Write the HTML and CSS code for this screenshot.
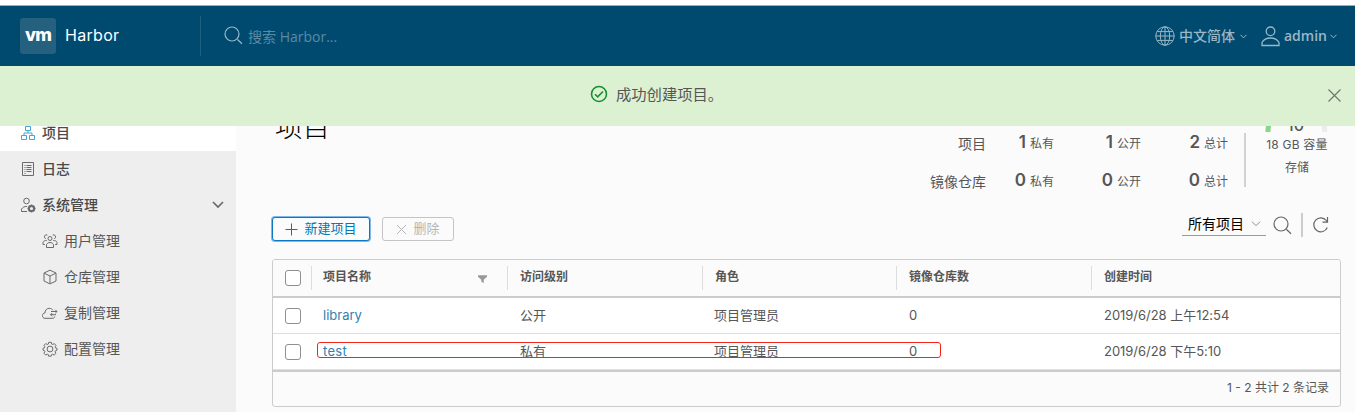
FILE: index.html
```html
<!DOCTYPE html>
<html lang="zh-CN">
<head>
<meta charset="utf-8">
<title>Harbor</title>
<link rel="stylesheet" href="styles.css">
</head>
<body>
<header class="header">
  <div class="logo">vm</div>
  <span class="brand">Harbor</span>
  <div class="search">
    <svg class="search-icon" width="20" height="20" viewBox="0 0 20 20"><circle cx="8" cy="8" r="7"/><path d="M13.5 13.5l4.5 4.3"/></svg>
    <span class="placeholder">搜索 Harbor...</span>
  </div>
  <div class="account">
    <svg class="globe" width="20" height="20" viewBox="0 0 20 20"><circle cx="10" cy="10" r="9.2"/><ellipse cx="10" cy="10" rx="4.7" ry="9.2"/><path d="M10 .8v18.4M.8 10h18.4M2 5.6h16M2 14.4h16"/></svg>
    <span class="lang">中文简体</span>
    <svg class="caret" width="7" height="5" viewBox="0 0 7 5"><path d="M.5.8l3 3 3-3"/></svg>
    <svg class="person" width="19" height="21" viewBox="0 0 19 21"><circle cx="9.5" cy="5.3" r="4.3"/><path d="M1 19.5v-3c1.700-3 4.800-4.500 8.500-4.500s6.800 1.500 8.500 4.500v3z"/></svg>
    <span class="user">admin</span>
    <svg class="caret" width="7" height="5" viewBox="0 0 7 5"><path d="M.5.8l3 3 3-3"/></svg>
  </div>
</header>
<div class="alert">
  <svg class="ok" width="18" height="18" viewBox="0 0 18 18"><circle cx="9" cy="9" r="7.500"/><path d="M5 9.200l2.700 2.700 5.300-5.400"/></svg>
  <span>成功创建项目。</span>
  <svg class="close" width="13" height="13" viewBox="0 0 13 13"><path d="M.5.5l12 12M12.500.5l-12 12"/></svg>
</div>
<div class="body">
  <nav class="sidebar">
    <div class="nav-item active">
      <svg class="blue" width="16" height="16" viewBox="0 0 16 16"><path d="M5.500 1.500h5v4h-5zM1.500 10.500h5v4h-5zM9.500 10.500h5v4h-5zM8 5.500v2.500M4 10V8h8v2"/></svg>
      <span>项目</span>
    </div>
    <div class="nav-item">
      <svg width="16" height="16" viewBox="0 0 16 16"><path d="M2.500 1.500h11v13h-11z"/><path d="M4.500 4.500h1M6.500 4.500h5M4.500 6.500h1M6.500 6.500h5M4.500 8.500h1M6.500 8.500h5M4.500 10.500h1M6.500 10.500h5M4.500 12.500h1"/></svg>
      <span>日志</span>
    </div>
    <div class="nav-item">
      <svg width="16" height="16" viewBox="0 0 16 16"><circle cx="6.500" cy="4" r="2.800"/><path d="M7 14.500H1.500v-2.300C2.500 10.300 4.300 9.400 7 9.400"/><circle class="cog" cx="11.500" cy="11.500" r="2.600"/><path class="teeth" d="M11.500 7.500v1.500M11.500 14v1.500M7.500 11.500h1.500M14 11.500h1.500M8.700 8.700l1 1M13.300 13.300l1 1M14.300 8.700l-1 1M8.700 14.300l1-1"/></svg>
      <span>系统管理</span>
      <svg class="fold" width="12" height="8" viewBox="0 0 12 8"><path d="M1 1l5 5 5-5"/></svg>
    </div>
    <div class="nav-item sub">
      <svg width="16" height="16" viewBox="0 0 16 16"><circle cx="8" cy="5.500" r="2"/><path d="M4.500 14.500v-3c1-1.400 2-2 3.500-2s2.500.6 3.500 2v3zM5.300 2a2 2 0 1 0-1.500 3.700M10.700 2a2 2 0 1 1 1.500 3.700M4.800 7.600C2.800 7.300 1.600 8 1 9.300v2.200h1.800M11.200 7.600c2-.3 3.200.4 3.800 1.700v2.200h-1.800"/></svg>
      <span>用户管理</span>
    </div>
    <div class="nav-item sub">
      <svg width="16" height="16" viewBox="0 0 16 16"><path d="M8 1.200l6 2.800v8l-6 2.900L2 12V4zM2.200 4.200L8 7l5.800-2.800M8 7v7.600"/></svg>
      <span>仓库管理</span>
    </div>
    <div class="nav-item sub">
      <svg width="16" height="16" viewBox="0 0 16 16"><path d="M12.800 11.500c-.4 1.300-1 1.800-2 1.800H3C1.200 13.300.4 12 .4 10.700c0-1.500 1-2.600 2.500-2.700.1-2.900 1.900-4.700 4.300-4.700 1.600 0 2.900.7 3.600 1.900M9 6.500h6M13.300 4.800L15 6.500l-1.700 1.700M14 9.700H8.500M10.200 8l-1.700 1.700 1.700 1.700"/></svg>
      <span>复制管理</span>
    </div>
    <div class="nav-item sub">
      <svg width="16" height="16" viewBox="0 0 16 16"><circle cx="8" cy="8" r="2.900"/><path d="M6.700 1.300h2.600l.4 1.800 1 .4 1.600-.9 1.700 1.800-.9 1.500.4 1 1.500.3v2l-1.600.6-.4 1 .9 1.600-1.800 1.700-1.500-.9-1 .4-.4 1.600H6.700l-.4-1.600-1-.4-1.600.9L2 12.300l.9-1.600-.4-1L1 9.200v-2l1.500-.4.4-1L2 4.400l1.700-1.800 1.600.9 1-.4z"/></svg>
      <span>配置管理</span>
    </div>
  </nav>
  <main class="main">
    <section class="summary">
      <h1 class="title">项目</h1>
      <div class="stats">
        <span class="stat-name">项目</span>
        <span class="stat"><b>1</b>私有</span>
        <span class="stat"><b>1</b>公开</span>
        <span class="stat"><b>2</b>总计</span>
        <span class="stat-name">镜像仓库</span>
        <span class="stat"><b>0</b>私有</span>
        <span class="stat"><b>0</b>公开</span>
        <span class="stat"><b>0</b>总计</span>
      </div>
      <div class="storage">
        <div class="gauge">
          <svg width="64" height="31" viewBox="0 0 64 31"><path class="ring" d="M4 32a29 29 0 0 1 3-14"/><path class="ring rest" d="M7 18a29 29 0 0 1 51.500 0a29 29 0 0 1 2 14"/></svg>
          <span class="gauge-value">10</span>
        </div>
        <div class="capacity">18 GB 容量</div>
        <div class="storage-name">存储</div>
      </div>
    </section>
    <section class="toolbar">
      <button class="btn primary"><svg width="13" height="13" viewBox="0 0 13 13"><path d="M6.500.5v12M.5 6.500h12"/></svg>新建项目</button>
      <button class="btn disabled"><svg width="11" height="11" viewBox="0 0 11 11"><path d="M1 1l9 9M10 1l-9 9"/></svg>删除</button>
      <div class="filter">
        <div class="select">所有项目<svg width="10" height="6" viewBox="0 0 10 6"><path d="M1 .7l4 4 4-4"/></svg></div>
        <svg class="find" width="20" height="20" viewBox="0 0 20 20"><circle cx="8" cy="8" r="7"/><path d="M13.300 13.300l4.700 4.500"/></svg>
        <svg class="refresh" width="18" height="18" viewBox="0 0 18 18"><path d="M15.300 11.500A7 7 0 1 1 14.300 4.500l1.200 1.500M15.500 1v5.200h-5"/></svg>
      </div>
    </section>
    <section class="grid">
      <div class="row head">
        <span class="check"><i></i></span>
        <span class="cell">项目名称<svg class="funnel" width="9" height="8" viewBox="0 0 9 8"><path d="M0 .3h9v1.500L5.700 4.700V8L3.300 6.800V4.700L0 1.800z"/></svg></span>
        <span class="cell">访问级别</span>
        <span class="cell">角色</span>
        <span class="cell">镜像仓库数</span>
        <span class="cell">创建时间</span>
      </div>
      <div class="row">
        <span class="check"><i></i></span>
        <span class="cell link library">library</span>
        <span class="cell">公开</span>
        <span class="cell">项目管理员</span>
        <span class="cell count">0</span>
        <span class="cell date">2019/6/28 上午12:54</span>
      </div>
      <div class="row last">
        <span class="check"><i></i></span>
        <span class="cell link test">test</span>
        <span class="cell">私有</span>
        <span class="cell">项目管理员</span>
        <span class="cell count">0</span>
        <span class="cell date">2019/6/28 下午5:10</span>
        <span class="mark"></span>
      </div>
      <div class="foot">1 - 2 共计 2 条记录</div>
    </section>
  </main>
</div>
</body>
</html>
```
FILE: styles.css
```css
* { box-sizing: border-box; }
body {
  margin: 0;
  height: 412px;
  overflow: hidden;
  display: flex;
  flex-direction: column;
  padding-top: 5px;
  background: #fff;
  color: #565656;
  font-family: Inter, "Noto Sans CJK SC", sans-serif;
  font-size: 13px;
}
svg { flex: none; fill: none; stroke: currentColor; display: block; }
span { white-space: nowrap; }

.header {
  flex: none;
  height: 61px;
  border-top: 1px solid #a3abab;
  background: #004a70;
  display: flex;
  align-items: center;
  padding: 0 18px 0 20px;
}
.logo {
  width: 36px;
  height: 36px;
  border-radius: 3px;
  background: #25607f;
  color: #fff;
  font: 800 18px/34px Inter, sans-serif;
  letter-spacing: -0.8px;
  text-align: center;
}
.brand { width: 135px; margin: -2px 0 0 9px; color: #fff; font-size: 16px; letter-spacing: 0.3px; }
.search {
  height: 40px;
  border-left: 1px solid #20607f;
  padding-left: 23px;
  display: flex;
  align-items: center;
  color: #5a8ba3;
  font: 14px "Open Sans", "Noto Sans CJK SC", sans-serif;
}
.search-icon { color: #99b7c6; stroke-width: 1.2; margin-right: 4px; }
.account {
  margin-left: auto;
  display: flex;
  align-items: center;
  color: #99b7c6;
  font: 500 14px "Open Sans", "Noto Sans CJK SC", sans-serif;
}
.globe { margin-right: 4px; }
.lang { width: 61px; margin-top: -2px; }
.user { width: 46px; margin-top: -2px; font-weight: 600; }
.person { margin: 0 4px 0 14px; stroke-width: 1.3; }

.alert {
  flex: none;
  height: 60px;
  background: #dcf0d2;
  display: flex;
  align-items: center;
  padding: 0 14px 3px 590px;
  font-size: 15.300px;
  line-height: 20px;
}
.ok { color: #17902f; stroke-width: 1.6; margin: -1px 8px 0 0; }
.close { margin: 2px 0 0 auto; color: #6d7a6c; stroke-width: 1.2; }

.body { flex: 1; min-height: 0; display: flex; overflow: hidden; }
.sidebar { flex: none; width: 236px; background: #eee; }
.nav-item {
  height: 36px;
  display: flex;
  align-items: center;
  padding: 0 12px 0 20px;
  gap: 6px;
  color: #494949;
  font-size: 14px;
  line-height: 14px;
  font-weight: 500;
}
.nav-item span { margin-top: -1px; }
.nav-item svg { color: #6a6a6a; }
.nav-item.active { margin-top: -11px; background: #fff; }
.nav-item.sub { padding-left: 42px; font-weight: 400; color: #565656; }
.nav-item .blue { color: #4aa3d2; }
.fold { margin-left: auto; stroke-width: 1.7; }
.cog { stroke-width: 2; }
.teeth { stroke-width: 1.5; }

.main { flex: 1; background: #fbfbfb; padding: 0 14px 0 36px; }
.summary { display: flex; height: 91px; }
.title { margin: -19px 0 0 3px; color: #000; font-size: 27.500px; line-height: 40px; height: 40px; font-weight: 300; }
.stats {
  margin-left: auto;
  display: grid;
  grid-template-columns: 70px 68px 87px 87px;
  grid-auto-rows: 38px;
  align-items: center;
  text-align: right;
  margin-top: -3px;
}
.stat-name { font-size: 14px; padding-top: 2px; }
.stat { font-size: 12px; }
.stat b { font-size: 17px; font-weight: 600; margin-right: 4px; }
.storage { width: 113px; padding-left: 18px; position: relative; text-align: center; font-size: 12px; }
.storage::before { content: ""; position: absolute; left: 16px; top: 7px; width: 2px; height: 54px; background: #d2d2d2; }
.gauge { height: 31px; width: 64px; margin: -25px auto 0; position: relative; left: 2px; overflow: hidden; }
.ring { stroke: #8bd48d; stroke-width: 5; }
.rest { stroke: #ededed; }
.gauge-value { position: absolute; left: 0; right: 0; bottom: -2px; font-size: 16px; line-height: 18px; font-weight: 500; }
.capacity { line-height: 18px; margin: 4px 0 0 7px; letter-spacing: 0.2px; }
.storage-name { line-height: 18px; margin: 5px 0 0 7px; }

.toolbar { display: flex; height: 42px; gap: 12px; }
.btn {
  height: 24px;
  border-radius: 3px;
  background: #fbfbfb;
  padding: 0 0 2px;
  display: flex;
  align-items: center;
  justify-content: center;
  gap: 6px;
  font: 13px/20px Inter, "Noto Sans CJK SC", sans-serif;
}
.primary { width: 98px; border: 1px solid #0a79c4; box-shadow: 0 0 0 1px #7bb9ef; color: #0079b8; }
.disabled { width: 72px; border: 1px solid #c4c4c4; color: #b5b5b5; }
.btn svg { margin-top: 2px; }
.filter { margin-left: auto; display: flex; align-items: flex-start; color: #666; }
.select {
  width: 84px;
  height: 23px;
  margin-top: -4px;
  border-bottom: 1px solid #9a9a9a;
  padding: 0 5px 2px 6px;
  display: flex;
  align-items: center;
  justify-content: space-between;
  color: #000;
  font-size: 14px;
}
.select svg { color: #8c8c8c; margin-top: 2px; }
.find { margin: -1px 8px 0 7px; stroke-width: 1.2; }
.refresh { box-sizing: content-box; padding: 3px 0 3px 9px; margin: -4px 11px 0 0; border-left: 2px solid #ccc; stroke-width: 1.2; }

.grid { width: 1069px; border: 1px solid #ccc; border-radius: 3px; overflow: hidden; }
.row {
  position: relative;
  display: grid;
  grid-template-columns: 38px 196px 195px 194px 195px 1fr;
  height: 36px;
  align-items: center;
  background: #fff;
  border-bottom: 1px solid #ddd;
}
.head { height: 38px; background: #fbfbfb; border-bottom: 2px solid #ccc; font-size: 12px; font-weight: 700; }
.last { height: 38px; border-bottom: 2px solid #ccc; box-shadow: inset 0 -1px 0 #e0e0e0; }
.check { padding-left: 12px; }
.check i { display: block; width: 16px; height: 16px; border: 1px solid #8f8f8f; border-radius: 3px; background: #fff; }
.cell { padding: 0 0 2px 13px; line-height: 24px; display: flex; align-items: center; }
.cell:nth-child(2) { padding-left: 12px; }
.cell:nth-child(4) { padding-left: 12px; }
.head .cell { height: 24px; border-left: 1px solid #ddd; padding: 0 0 3px 12px; }
.head .cell:nth-child(2) { padding-left: 11px; }
.funnel { margin: 4px 20px 0 auto; fill: #999; stroke: none; }
.link { color: #317fb0; }
.test { letter-spacing: 0.3px; }
.count { font-size: 13px; }
.date { letter-spacing: -0.03px; }
.mark { position: absolute; left: 44px; top: 8px; width: 624px; height: 16px; border: 1px solid #f32418; border-radius: 3px; }
.foot { height: 34px; line-height: 31px; padding-right: 11px; text-align: right; font-size: 12px; }
```
